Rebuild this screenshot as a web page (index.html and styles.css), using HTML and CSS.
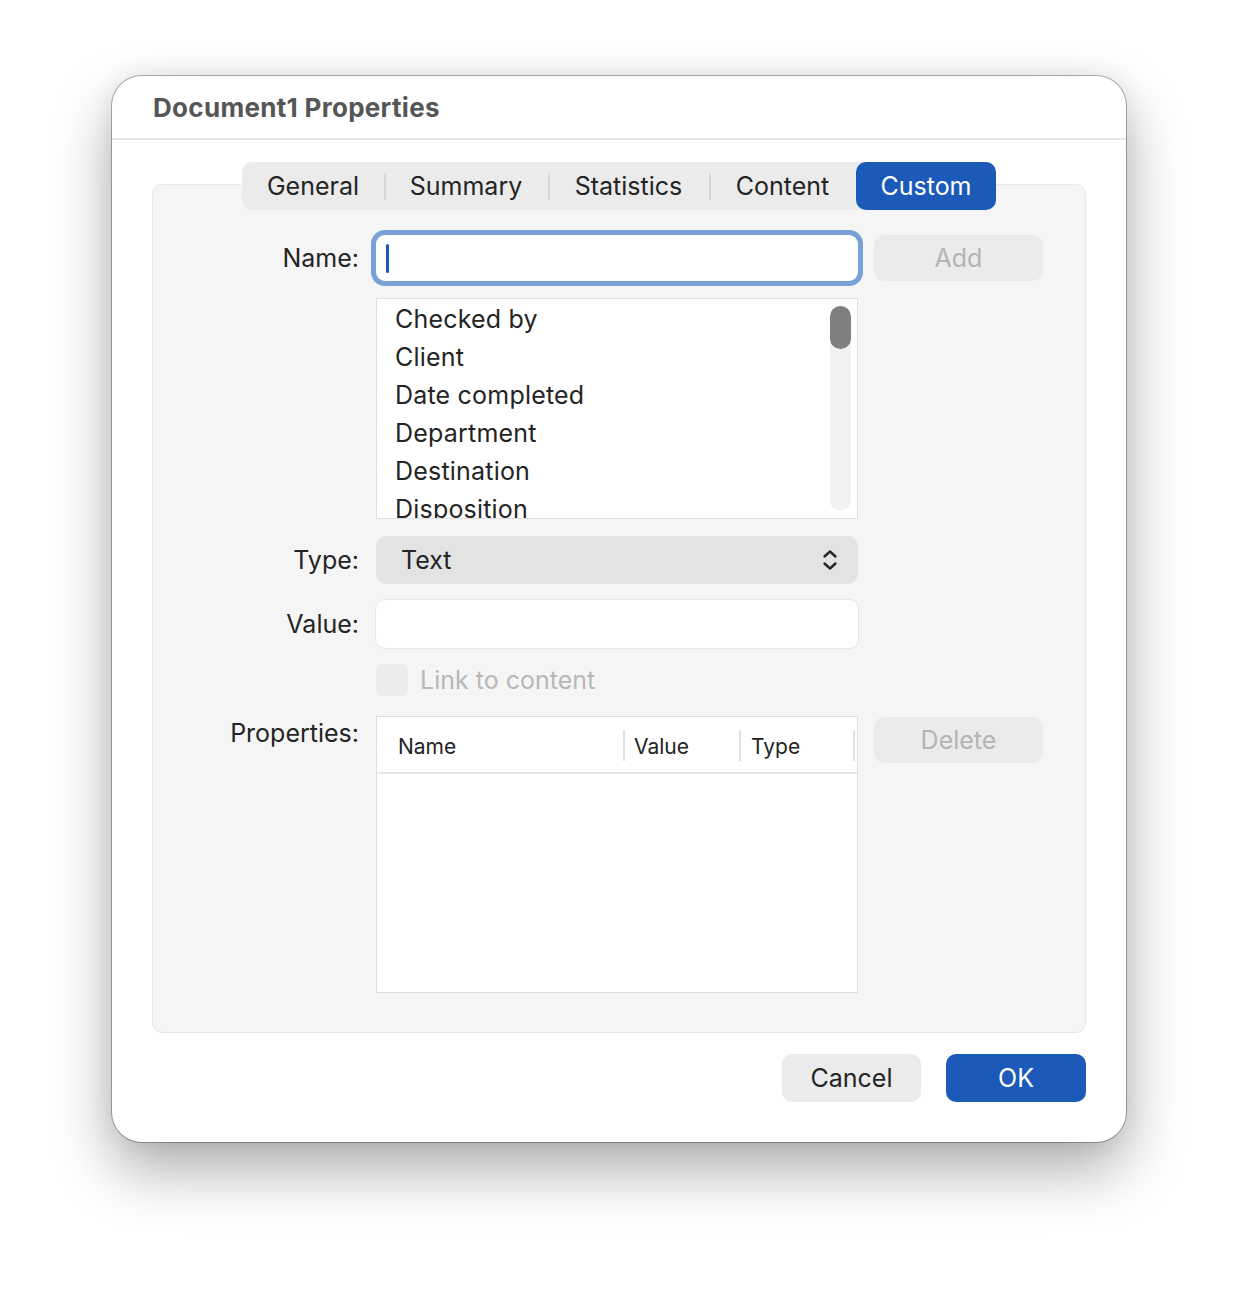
FILE: index.html
```html
<!DOCTYPE html>
<html lang="en">
<head>
<meta charset="utf-8">
<title>Document1 Properties</title>
<link rel="stylesheet" href="styles.css">
</head>
<body>
<div class="window">
  <header class="titlebar">Document1 Properties</header>
  <div class="content">
    <section class="panel">
      <nav class="tabs">
        <span class="tab">General</span>
        <span class="tab sep">Summary</span>
        <span class="tab sep">Statistics</span>
        <span class="tab sep">Content</span>
        <span class="tab active">Custom</span>
      </nav>
      <div class="form">
        <div class="row row-name">
          <label class="label">Name:</label>
          <div class="field focused"><span class="caret"></span></div>
          <button class="btn disabled">Add</button>
        </div>
        <div class="row row-list">
          <span class="label"></span>
          <div class="list">
            <div class="item">Checked by</div>
            <div class="item">Client</div>
            <div class="item">Date completed</div>
            <div class="item">Department</div>
            <div class="item">Destination</div>
            <div class="item">Disposition</div>
            <div class="scrollbar"><div class="thumb"></div></div>
          </div>
        </div>
        <div class="row row-type">
          <label class="label">Type:</label>
          <div class="popup">
            <span>Text</span>
            <svg class="chevrons" width="16" height="22" viewBox="0 0 16 22">
              <polyline points="2.5,7.5 8,2.5 13.5,7.5" fill="none" stroke="#262626" stroke-width="2.4" stroke-linecap="round" stroke-linejoin="round"/>
              <polyline points="2.5,14.5 8,19.5 13.5,14.5" fill="none" stroke="#262626" stroke-width="2.4" stroke-linecap="round" stroke-linejoin="round"/>
            </svg>
          </div>
        </div>
        <div class="row row-value">
          <label class="label">Value:</label>
          <div class="field plain"></div>
        </div>
        <div class="row row-check">
          <span class="label"></span>
          <div class="check">
            <span class="box"></span>
            <span class="check-text">Link to content</span>
          </div>
        </div>
        <div class="row row-props">
          <label class="label label-top">Properties:</label>
          <div class="table">
            <div class="thead">
              <span class="th th-name">Name</span>
              <span class="th th-value">Value</span>
              <span class="th th-type">Type</span>
            </div>
            <div class="tbody"></div>
          </div>
          <button class="btn disabled btn-top">Delete</button>
        </div>
      </div>
    </section>
    <footer class="actions">
      <button class="btn footer-btn">Cancel</button>
      <button class="btn footer-btn primary">OK</button>
    </footer>
  </div>
</div>
</body>
</html>
```
FILE: styles.css
```css
* {
  box-sizing: border-box;
}

html, body {
  margin: 0;
  padding: 0;
  background: #ffffff;
}

body {
  font-family: "Inter", "Liberation Sans", sans-serif;
  color: #242424;
  padding: 76px 0 0 112px;
  min-height: 1290px;
}

.window {
  width: 1014px;
  height: 1066px;
  background: #ffffff;
  border-radius: 30px;
  box-shadow:
    0 0 0 1px rgba(0, 0, 0, 0.28),
    0 28px 60px rgba(0, 0, 0, 0.32),
    0 0 24px rgba(0, 0, 0, 0.08);
  display: flex;
  flex-direction: column;
  overflow: hidden;
}

.titlebar {
  height: 64px;
  padding-left: 41px;
  display: flex;
  align-items: center;
  font-size: 26px;
  font-weight: 700;
  color: #565656;
  border-bottom: 2px solid #e6e6e6;
  letter-spacing: 0.3px;
}

.content {
  padding: 22px 40px 40px;
  display: flex;
  flex-direction: column;
}

/* grouped panel holding the tab bar and the form */
.panel {
  margin-top: 22px;
  background: #f5f5f5;
  border: 1px solid #e8e8e8;
  border-radius: 10px;
  display: flex;
  flex-direction: column;
}

.tabs {
  align-self: center;
  margin-top: -23px;
  height: 48px;
  display: flex;
  background: #ebebeb;
  border-radius: 10px;
}

.tab {
  position: relative;
  display: flex;
  align-items: center;
  justify-content: center;
  font-size: 25px;
  padding: 0 24px;
  color: #242424;
}

.tab:nth-child(1) { width: 142px; }
.tab:nth-child(2) { width: 164px; }
.tab:nth-child(3) { width: 161px; }
.tab:nth-child(4) { width: 147px; }
.tab:nth-child(5) { width: 140px; }

.tab.sep::before {
  content: "";
  position: absolute;
  left: 0;
  top: 11px;
  bottom: 10px;
  width: 2px;
  background: #d6d6d6;
}

.tab.active {
  background: #1b5ab8;
  color: #ffffff;
  border-radius: 10px;
}

.form {
  padding: 25px 0 39px;
  display: flex;
  flex-direction: column;
}

.row {
  display: flex;
  align-items: center;
  gap: 17px;
}

.label {
  width: 206px;
  flex: none;
  text-align: right;
  font-size: 25px;
  color: #242424;
}

.label-top {
  align-self: flex-start;
  line-height: 34px;
}

.row-name { height: 46px; }
.row-list { margin-top: 17px; }
.row-type { margin-top: 17px; }
.row-value { margin-top: 15px; }
.row-check { margin-top: 15px; }
.row-props { margin-top: 20px; align-items: flex-start; }

.field {
  width: 482px;
  background: #ffffff;
  border-radius: 9px;
}

.field.focused {
  height: 46px;
  box-shadow: 0 0 0 5px #7aa1d5;
  display: flex;
  align-items: center;
  padding-left: 10px;
}

.caret {
  width: 3px;
  height: 29px;
  border-radius: 2px;
  background: #1a56c4;
}

.field.plain {
  height: 50px;
  border: 1px solid #e6e6e6;
  border-radius: 10px;
  margin-left: -1px;
  width: 484px;
}

.btn {
  font-family: inherit;
  border: none;
  border-radius: 10px;
  background: #ebebeb;
  font-size: 25px;
  color: #242424;
  padding: 0;
}

.btn.disabled {
  width: 169px;
  height: 46px;
  color: #b4b4b4;
  margin-left: -1px;
}

.btn-top {
  margin-top: 1px;
  height: 47px;
}

.list {
  position: relative;
  width: 482px;
  height: 221px;
  background: #ffffff;
  border: 1px solid #dedede;
  overflow: hidden;
  padding-top: 1px;
}

.item {
  height: 38px;
  line-height: 38px;
  padding-left: 18px;
  font-size: 25px;
  letter-spacing: 0.2px;
  color: #242424;
  white-space: nowrap;
}

/* overlay scroller on the right side of the list */
.scrollbar {
  position: absolute;
  top: 7px;
  right: 6px;
  width: 21px;
  height: 205px;
  border-radius: 11px;
  background: #f2f2f2;
}

.thumb {
  height: 43px;
  border-radius: 11px;
  background: #7f7f7f;
}

.popup {
  width: 482px;
  height: 48px;
  background: #e3e3e3;
  border-radius: 10px;
  display: flex;
  align-items: center;
  justify-content: space-between;
  padding: 0 20px 0 25px;
  font-size: 25px;
}

.chevrons {
  display: block;
}

.check {
  display: flex;
  align-items: center;
  gap: 12px;
  height: 32px;
}

.box {
  width: 32px;
  height: 32px;
  border-radius: 8px;
  background: #ebebeb;
}

.check-text {
  font-size: 25px;
  color: #b8b8b8;
}

.table {
  width: 482px;
  height: 277px;
  background: #ffffff;
  border: 1px solid #dedede;
  display: flex;
  flex-direction: column;
}

.thead {
  height: 57px;
  border-bottom: 2px solid #e6e6e6;
  display: flex;
  align-items: center;
  font-size: 21px;
}

.th {
  position: relative;
  height: 100%;
  display: flex;
  align-items: center;
  padding-top: 3px;
}

.th-name { width: 246px; padding-left: 21px; }
.th-value { width: 116px; padding-left: 11px; }
.th-type { width: 116px; padding-left: 12px; }

.th-value::before,
.th-type::before,
.th-type::after {
  content: "";
  position: absolute;
  top: 13px;
  bottom: 11px;
  width: 2px;
  background: #e2e2e2;
}

.th-value::before,
.th-type::before { left: 0; }
.th-type::after { right: 0; }

.tbody {
  flex: 1;
}

.actions {
  margin-top: 21px;
  display: flex;
  justify-content: flex-end;
  gap: 25px;
}

.footer-btn {
  width: 139px;
  height: 48px;
}

.footer-btn.primary {
  width: 140px;
  background: #1b5ab8;
  color: #ffffff;
}
```
